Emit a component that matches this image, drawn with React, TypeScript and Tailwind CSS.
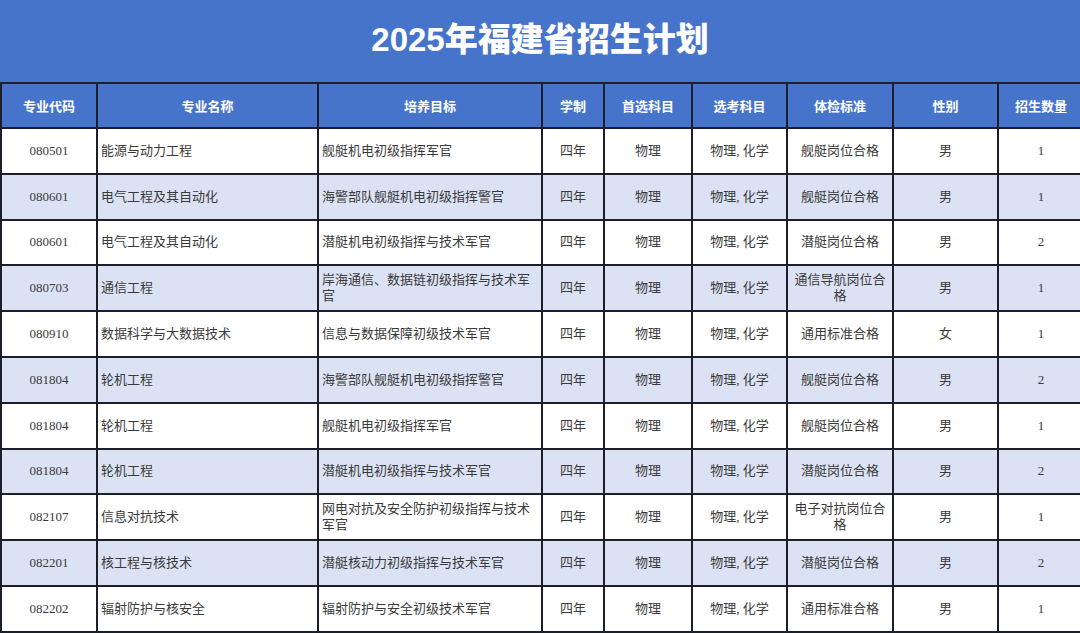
import React from "react";

const rows: string[][] = [
  ["080501", "能源与动力工程", "舰艇机电初级指挥军官", "四年", "物理", "物理, 化学", "舰艇岗位合格", "男", "1"],
  ["080601", "电气工程及其自动化", "海警部队舰艇机电初级指挥警官", "四年", "物理", "物理, 化学", "舰艇岗位合格", "男", "1"],
  ["080601", "电气工程及其自动化", "潜艇机电初级指挥与技术军官", "四年", "物理", "物理, 化学", "潜艇岗位合格", "男", "2"],
  ["080703", "通信工程", "岸海通信、数据链初级指挥与技术军官", "四年", "物理", "物理, 化学", "通信导航岗位合格", "男", "1"],
  ["080910", "数据科学与大数据技术", "信息与数据保障初级技术军官", "四年", "物理", "物理, 化学", "通用标准合格", "女", "1"],
  ["081804", "轮机工程", "海警部队舰艇机电初级指挥警官", "四年", "物理", "物理, 化学", "舰艇岗位合格", "男", "2"],
  ["081804", "轮机工程", "舰艇机电初级指挥军官", "四年", "物理", "物理, 化学", "舰艇岗位合格", "男", "1"],
  ["081804", "轮机工程", "潜艇机电初级指挥与技术军官", "四年", "物理", "物理, 化学", "潜艇岗位合格", "男", "2"],
  ["082107", "信息对抗技术", "网电对抗及安全防护初级指挥与技术军官", "四年", "物理", "物理, 化学", "电子对抗岗位合格", "男", "1"],
  ["082201", "核工程与核技术", "潜艇核动力初级指挥与技术军官", "四年", "物理", "物理, 化学", "潜艇岗位合格", "男", "2"],
  ["082202", "辐射防护与核安全", "辐射防护与安全初级技术军官", "四年", "物理", "物理, 化学", "通用标准合格", "男", "1"],
];

const headers = ["专业代码", "专业名称", "培养目标", "学制", "首选科目", "选考科目", "体检标准", "性别", "招生数量"];
const widths = [96, 221, 224, 62, 88, 95, 106, 105, 86];

export default function App() {
  return (
    <div className="w-[1080px] h-[633px] overflow-hidden bg-white" style={{ fontFamily: '"Liberation Serif", "Noto Sans CJK SC", serif' }}>
      <div className="h-[83px] bg-[#4674cb] flex items-center justify-center pb-[4px]">
        <h1 className="text-white text-[33px] leading-[40px] font-black" style={{ fontFamily: '"Liberation Sans", "Noto Sans CJK SC", sans-serif' }}>
          2025年福建省招生计划
        </h1>
      </div>
      <table className="border-collapse table-fixed w-[1083px] -mt-[1px]">
        <colgroup>
          {widths.map((w, i) => (
            <col key={i} style={{ width: w }} />
          ))}
        </colgroup>
        <thead>
          <tr className="h-[45px] bg-[#4674cb]">
            {headers.map((h) => (
              <th
                key={h}
                className="border-2 border-[#1c1f2a] text-white text-[13px] font-bold text-center align-middle"
                style={{ fontFamily: '"Noto Sans CJK SC", sans-serif' }}
              >
                {h}
              </th>
            ))}
          </tr>
        </thead>
        <tbody>
          {rows.map((r, ri) => (
            <tr key={ri} className={`h-[45.8px] ${ri % 2 === 1 ? "bg-[#dae2f3]" : "bg-white"}`}>
              {r.map((c, ci) => (
                <td
                  key={ci}
                  className={`border-2 border-[#1c1f2a] text-[13px] leading-[16px] text-[#3a3a3a] align-middle px-[3px] ${
                    ci === 1 || ci === 2 ? "text-left" : "text-center"
                  }`}
                >
                  {c}
                </td>
              ))}
            </tr>
          ))}
        </tbody>
      </table>
    </div>
  );
}
